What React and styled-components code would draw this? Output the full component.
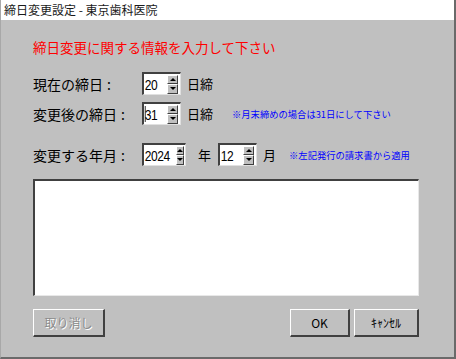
import React from 'react';
import styled, { createGlobalStyle } from 'styled-components';

const Global = createGlobalStyle`
	html, body { margin: 0; padding: 0; background: #c0c0c0; }
	body { font-family: "MS UI Gothic", "Noto Sans CJK JP", "Liberation Sans", sans-serif; }
`;

function Spinner({ value, width = 39, caret }) {
	return (
		<SpinBox width={width}>
			<SpinText>
				{caret && <Caret/>}
				{value}
			</SpinText>
			<SpinButtons>
				<SpinButton><Arrow up/></SpinButton>
				<SpinButton><Arrow/></SpinButton>
			</SpinButtons>
		</SpinBox>
	);
}

function App(){
	return(
		<Window>
			<Global/>
			<TitleBar>締日変更設定 - 東京歯科医院</TitleBar>
			<Body>
				<Heading>締日変更に関する情報を入力して下さい</Heading>
				<Row top={17}>
					<Label>現在の締日<Colon>:</Colon></Label>
					<Spinner value="20"/>
					<Unit>日締</Unit>
				</Row>
				<Row top={7}>
					<Label>変更後の締日<Colon>:</Colon></Label>
					<Spinner value="31" caret/>
					<Unit>日締</Unit>
					<Note>※月末締めの場合は31日にして下さい</Note>
				</Row>
				<Row top={18}>
					<Label>変更する年月<Colon>:</Colon></Label>
					<Spinner value="2024" width={44}/>
					<Unit left={12} right={7}>年</Unit>
					<Spinner value="12" width={39}/>
					<Unit left={6} right={0}>月</Unit>
					<Note left={13}>※左記発行の請求書から適用</Note>
				</Row>
				<Memo/>
				<ButtonRow>
					<Button disabled>取り消し</Button>
					<Spacer/>
					<Button wide={60}>OK</Button>
					<Button wide={65}>ｷｬﾝｾﾙ</Button>
				</ButtonRow>
			</Body>
		</Window>
	);
}

const Window = styled.div`
	width: 456px;
	height: 359px;
	box-sizing: border-box;
	display: flex;
	flex-direction: column;
	background: #c0c0c0;
	border-right: 2px solid #6a6a6a;
	border-bottom: 2px solid #6a6a6a;
	border-left: 1px solid #a8a8a8;
	overflow: hidden;
`;

const TitleBar = styled.div`
	height: 20px;
	background: #ffffff;
	font-size: 12px;
	line-height: 20px;
	padding-left: 3px;
	color: #1a1a1a;
	white-space: nowrap;
`;

const Body = styled.div`
	flex: 1;
	display: flex;
	flex-direction: column;
	padding: 19px 0 0 32px;
`;

const Heading = styled.div`
	color: #ff0000;
	font-size: 13.5px;
	line-height: 16px;
	white-space: nowrap;
`;

const Row = styled.div`
	display: flex;
	align-items: center;
	height: 23px;
	margin-top: ${({ top }) => top}px;
`;

const Label = styled.div`
	width: 109px;
	font-size: 14px;
	white-space: nowrap;
	color: #000;
`;

const Colon = styled.span`
	margin-left: 4px;
`;

const Unit = styled.div`
	font-size: 13px;
	margin: 0 ${({ right }) => right ?? 7}px 0 ${({ left }) => left ?? 6}px;
	white-space: nowrap;
	color: #000;
`;

const Note = styled.div`
	font-size: 9.3px;
	color: #0000ff;
	margin-left: ${({ left }) => left ?? 12}px;
	white-space: nowrap;
`;

const SpinBox = styled.div`
	width: ${({ width }) => width}px;
	height: 23px;
	box-sizing: border-box;
	background: #fff;
	border-top: 2px solid #404040;
	border-left: 2px solid #404040;
	border-right: 1px solid #e0e0e0;
	border-bottom: 1px solid #e0e0e0;
	display: flex;
	align-items: center;
	padding-right: 2px;
`;

const SpinText = styled.div`
	flex: 1;
	display: flex;
	align-items: center;
	font-family: "Liberation Sans Narrow", "Liberation Sans", sans-serif;
	font-size: 15px;
	letter-spacing: -0.5px;
	padding-left: 1px;
	color: #000;
	transform: scaleX(0.8);
	transform-origin: left center;
`;

const Caret = styled.span`
	display: inline-block;
	width: 1px;
	height: 16px;
	background: #000;
	margin-right: -1px;
`;

const SpinButtons = styled.div`
	display: flex;
	flex-direction: column;
	width: 11px;
	height: 19px;
`;

const SpinButton = styled.div`
	flex: 1;
	box-sizing: border-box;
	background: #c0c0c0;
	border-top: 1px solid #fff;
	border-left: 1px solid #fff;
	border-right: 1px solid #404040;
	border-bottom: 1px solid #404040;
	display: flex;
	align-items: center;
	justify-content: center;
`;

const Arrow = styled.div`
	width: 0;
	height: 0;
	border-left: 3px solid transparent;
	border-right: 3px solid transparent;
	${({ up }) => up ? 'border-bottom: 3px solid #000;' : 'border-top: 3px solid #000;'}
`;

const Memo = styled.div`
	width: 386px;
	height: 117px;
	box-sizing: border-box;
	margin-top: 13px;
	background: #fff;
	border-top: 2px solid #404040;
	border-left: 2px solid #404040;
	border-right: 1px solid #e8e8e8;
	border-bottom: 1px solid #e8e8e8;
`;

const ButtonRow = styled.div`
	display: flex;
	width: 386px;
	margin-top: 13px;
	gap: 4px;
`;

const Spacer = styled.div`
	flex: 1;
`;

const Button = styled.div`
	width: ${({ wide }) => wide ?? 72}px;
	height: 28px;
	box-sizing: border-box;
	background: #c0c0c0;
	border-top: 1px solid #fff;
	border-left: 1px solid #fff;
	border-right: 2px solid #404040;
	border-bottom: 2px solid #404040;
	display: flex;
	align-items: center;
	justify-content: center;
	font-size: 12px;
	color: ${({ disabled }) => disabled ? '#8c8c8c' : '#000'};
	text-shadow: ${({ disabled }) => disabled ? '1px 1px 0 #fff' : 'none'};
`;

export default App;
